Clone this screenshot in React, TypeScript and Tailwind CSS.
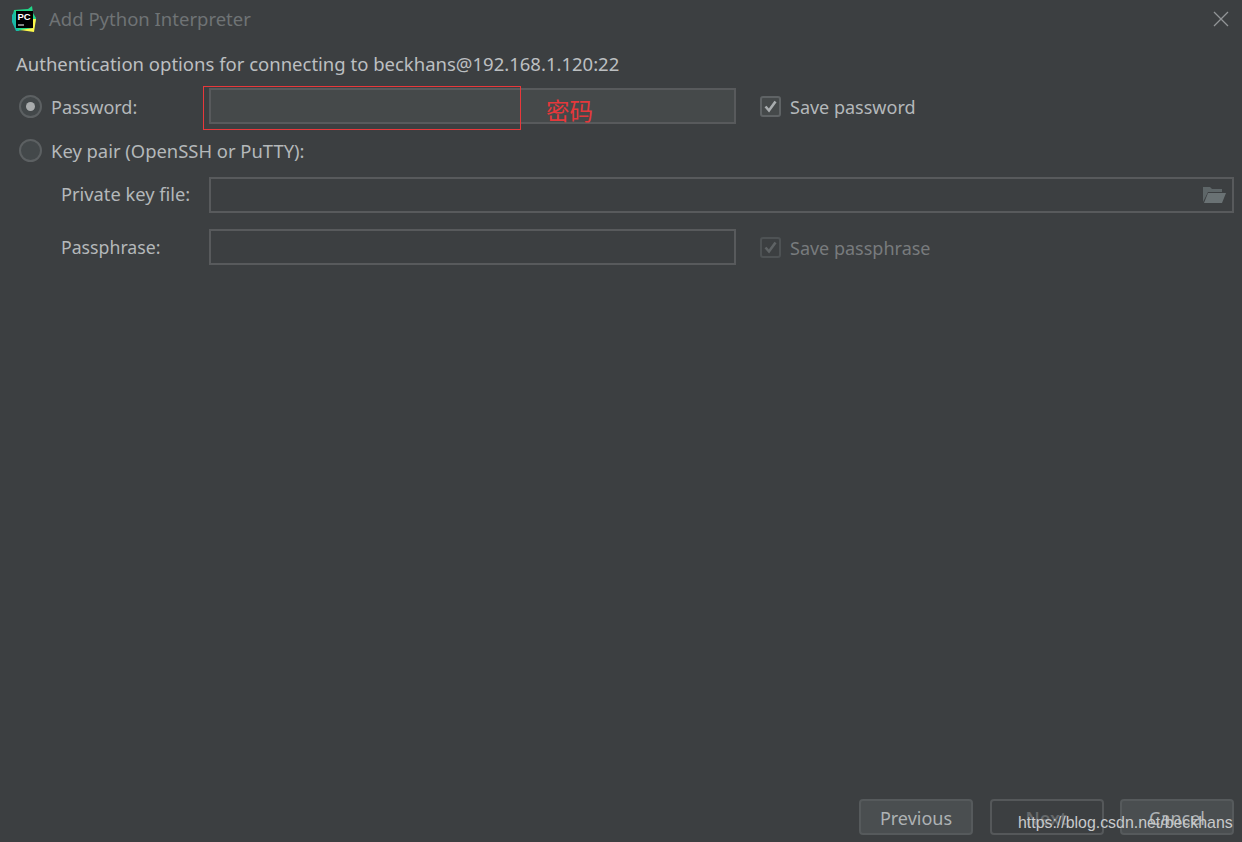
import type { ReactNode } from 'react'

function PyCharmLogo() {
  return (
    <svg width="26" height="27" viewBox="0 0 26 27" className="shrink-0">
      <path d="M3 4 L17 3 L21 0 L22 7 L25 12 L23 22 L6 25 L1 14 Z" fill="#21d789" />
      <path d="M1 9 L4 5 L5 20 L8 25 L5 25 L1 16 Z" fill="#19b9a8" />
      <path d="M9 24 L23 26 L25 13 L22 13 L22 22 Z" fill="#fcf84a" />
      <rect x="5" y="5" width="17" height="17" fill="#000000" />
      <text x="6.5" y="14" fill="#ffffff" fontSize="9.5" fontWeight="700" fontFamily="'Liberation Sans', sans-serif">
        PC
      </text>
      <rect x="7" y="18.5" width="6" height="1" fill="#ffffff" />
    </svg>
  )
}

function Radio({ checked }: { checked?: boolean }) {
  return (
    <span className="flex h-[23px] w-[23px] shrink-0 items-center justify-center rounded-full border-2 border-[#5c6062] bg-[#43484a]">
      {checked && <span className="h-[9px] w-[9px] rounded-full bg-[#a9acad]" />}
    </span>
  )
}

function Check({ disabled, label }: { disabled?: boolean; label: string }) {
  return (
    <div className="flex items-center gap-[9px]">
      <span
        className={
          'flex h-[21px] w-[21px] shrink-0 items-center justify-center rounded-[3px] border-2 ' +
          (disabled ? 'border-[#4e5254] bg-[#3c3f41]' : 'border-[#5f6365] bg-[#45494a]')
        }
      >
        <svg width="15" height="15" viewBox="0 0 15 15" fill="none">
          <path
            d="M2.5 7.5 L6 11.5 L12.5 2.5"
            stroke={disabled ? '#5f6365' : '#a9adaf'}
            strokeWidth="2.6"
          />
        </svg>
      </span>
      <span className={'pt-[2px] ' + (disabled ? 'text-[#787b7d]' : 'text-[#b4b8ba]')}>{label}</span>
    </div>
  )
}

function Field({ className, children }: { className: string; children?: ReactNode }) {
  return (
    <div className={'flex h-[36px] items-center justify-end border-2 border-[#585a5c] ' + className}>
      {children}
    </div>
  )
}

function Btn({ label, dim }: { label: string; dim?: boolean }) {
  return (
    <div
      className={
        'flex h-[36px] w-[114px] items-center justify-center rounded-[4px] border-2 pt-[2px] ' +
        (dim ? 'border-[#55585a] bg-[#3c3f41] font-semibold text-[#66696b]' : 'border-[#565a5c] bg-[#4a4e50] text-[#aeb2b4]')
      }
    >
      {label}
    </div>
  )
}

export default function App() {
  return (
    <div className="relative flex h-[842px] w-[1242px] flex-col overflow-hidden bg-[#3c3f41] font-['Noto_Sans',sans-serif] text-[18px] text-[#b4b8ba]">
      <div className="flex h-[38px] items-center pl-[11px] pr-[13px]">
        <PyCharmLogo />
        <span className="ml-[12px] text-[18.5px] text-[#6f7375]">Add Python Interpreter</span>
        <svg width="16" height="16" viewBox="0 0 16 16" className="ml-auto" fill="none">
          <path d="M1 1 L15 15 M15 1 L1 15" stroke="#929597" strokeWidth="1.3" />
        </svg>
      </div>

      <div className="flex flex-1 flex-col pl-[16px] pr-[8px]">
        <div className="mt-[13px] h-[26px] text-[18.5px] leading-[26px] text-[#bcbfc1]">
          Authentication options for connecting to beckhans@192.168.1.120:22
        </div>

        <div className="mt-[11px] flex items-center pl-[3px]">
          <Radio checked />
          <span className="ml-[9px] w-[158px] pt-[2px]">Password:</span>
          <Field className="w-[527px] bg-[#45494a]" />
          <div className="ml-[24px]">
            <Check label="Save password" />
          </div>
        </div>

        <div className="mt-[15px] flex h-[23px] items-center pl-[3px]">
          <Radio />
          <span className="ml-[9px] pt-[1px] text-[18.4px]">Key pair (OpenSSH or PuTTY):</span>
        </div>

        <div className="mt-[15px] flex items-center pl-[45px]">
          <span className="w-[148px] pb-[2px] text-[18.3px]">Private key file:</span>
          <Field className="flex-1 pr-[6px]">
            <svg width="24" height="18" viewBox="0 0 24 18">
              <path d="M1 1 H8 L10 3 H20 V6 H6 L1 16 Z" fill="#5e6668" />
              <path d="M6 7 H24 L20 17 H2 Z" fill="#6a7274" />
            </svg>
          </Field>
        </div>

        <div className="mt-[16px] flex items-center pl-[45px]">
          <span className="w-[148px] text-[17.7px]">Passphrase:</span>
          <Field className="w-[527px]" />
          <div className="ml-[24px]">
            <Check disabled label="Save passphrase" />
          </div>
        </div>

        <div className="mt-auto mb-[7px] flex justify-end gap-[16.5px]">
          <Btn label="Previous" />
          <Btn label="Next" dim />
          <Btn label="Cancel" />
        </div>
      </div>

      {/* red annotation drawn over the screenshot */}
      <div className="absolute left-[203px] top-[86px] h-[44px] w-[318px] border border-[#e8383b]" />
      <span className="absolute left-[546px] top-[95px] font-['Noto_Sans_CJK_SC',sans-serif] text-[23.5px] leading-[30px] text-[#e5383b]">
        密码
      </span>

      {/* blog watermark */}
      <span className="absolute left-[1018px] top-[813px] font-['Liberation_Sans',sans-serif] text-[15.9px] leading-[20px] text-[#c8cacb]">
        https://blog.csdn.net/beckhans
      </span>
    </div>
  )
}
